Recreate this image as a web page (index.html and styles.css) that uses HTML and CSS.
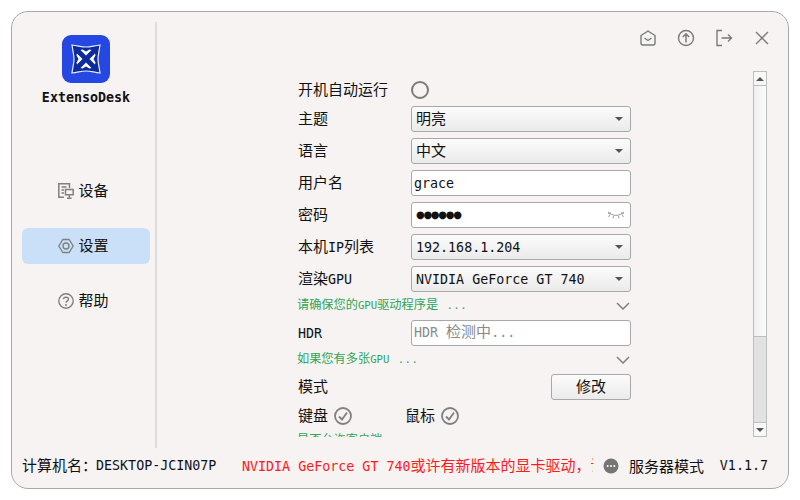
FILE: index.html
```html
<!DOCTYPE html>
<html lang="zh">
<head>
<meta charset="utf-8">
<title>ExtensoDesk</title>
<link rel="stylesheet" href="styles.css">
</head>
<body>
<div class="window">
  <div class="body">
    <aside class="sidebar">
      <svg class="logo" viewBox="0 0 48 48">
        <rect width="48" height="48" rx="9" fill="#2547e2"/>
        <path d="M10 10C17 11 20 12 24 12C28 12 31 11 38 10C37 17 36 20 36 24C36 28 37 31 38 38C31 37 28 36 24 36C20 36 17 37 10 38C11 31 12 28 12 24C12 20 11 17 10 10Z" fill="#0d2a9e" stroke="#e6ebff" stroke-width="1.200"/>
        <g fill="#fff">
          <path d="M24 20.500L18.500 15L20.500 14.500L24 16.500L27.500 14.500L29.500 15Z"/>
          <path d="M24 20.500L18.500 15L20.500 14.500L24 16.500L27.500 14.500L29.500 15Z" transform="rotate(90 24 24)"/>
          <path d="M24 20.500L18.500 15L20.500 14.500L24 16.500L27.500 14.500L29.500 15Z" transform="rotate(180 24 24)"/>
          <path d="M24 20.500L18.500 15L20.500 14.500L24 16.500L27.500 14.500L29.500 15Z" transform="rotate(270 24 24)"/>
        </g>
      </svg>
      <div class="brand">ExtensoDesk</div>
      <nav class="nav">
        <div class="nav-item">
          <svg class="nav-icon" viewBox="0 0 16 16"><path d="M11.500 5V.8H.8V14.200H6M3.500 4H8.500M3.500 7H6M3.500 10H6M7.500 6.500H15.200V11.800H7.500ZM11.300 11.800V15M9 15.200H13.600" fill="none" stroke="#808080" stroke-width="1.500"/></svg>
          <span class="nav-text">设备</span>
        </div>
        <div class="nav-item active">
          <svg class="nav-icon" viewBox="0 0 16 16"><path d="M4.800 1.500H11.200L15.200 8L11.200 14.500H4.800L.8 8Z" fill="none" stroke="#808080" stroke-width="1.400" stroke-linejoin="round"/><circle cx="8" cy="8" r="3" fill="none" stroke="#808080" stroke-width="1.400"/></svg>
          <span class="nav-text">设置</span>
        </div>
        <div class="nav-item">
          <svg class="nav-icon" viewBox="0 0 16 16"><circle cx="8" cy="8" r="7.200" fill="none" stroke="#808080" stroke-width="1.400"/><path d="M5.500 6.200C5.500 3.500 10.500 3.500 10.500 6.200C10.500 7.900 8 7.900 8 9.800" fill="none" stroke="#808080" stroke-width="1.400"/><circle cx="8" cy="12" r="1" fill="#808080"/></svg>
          <span class="nav-text">帮助</span>
        </div>
      </nav>
    </aside>
    <main class="main">
      <header class="topbar">
        <svg class="top-icon" viewBox="0 0 20 20"><path d="M3 7.500L10 3L17 7.500V15C17 16.200 16.200 17 15 17H5C3.800 17 3 16.200 3 15Z" fill="none" stroke="#7a7a7a" stroke-width="1.400" stroke-linejoin="round"/><path d="M6.500 10L10 12.500L13.500 10" fill="none" stroke="#7a7a7a" stroke-width="1.400"/></svg>
        <svg class="top-icon" viewBox="0 0 20 20"><circle cx="10" cy="10" r="7.500" fill="none" stroke="#7a7a7a" stroke-width="1.400"/><path d="M10 14.500V6M6.800 9L10 5.800L13.200 9" fill="none" stroke="#7a7a7a" stroke-width="1.500"/></svg>
        <svg class="top-icon" viewBox="0 0 20 20"><path d="M8 2.500H3V17.500H8" fill="none" stroke="#7a7a7a" stroke-width="1.400"/><path d="M7.500 10H17.500M14 6.500L17.500 10L14 13.500" fill="none" stroke="#7a7a7a" stroke-width="1.400"/></svg>
        <svg class="top-icon" viewBox="0 0 20 20"><path d="M4 4L16 16M16 4L4 16" fill="none" stroke="#7a7a7a" stroke-width="1.400"/></svg>
      </header>
      <div class="scroll-row">
        <div class="scroll-view">
          <div class="form">
            <div class="label">开机自动运行</div>
            <div class="radio-cell"><span class="radio"></span></div>

            <div class="label">主题</div>
            <div class="select"><span class="cjk">明亮</span><i class="caret"></i></div>

            <div class="label">语言</div>
            <div class="select"><span class="cjk">中文</span><i class="caret"></i></div>

            <div class="label">用户名</div>
            <div class="input tight"><span class="mono">grace</span></div>

            <div class="label">密码</div>
            <div class="input tight">
              <span class="dots">●●●●●●</span>
              <svg class="eye" viewBox="0 0 18 10"><path d="M1 2C6 6.500 12 6.500 17 2M3 4.500L1.500 7M6.500 6L6 8.500M11.500 6L12 8.500M15 4.500L16.500 7M1 4C2 3 2.500 3 4 3M17 4C16 3 15.500 3 14 3" fill="none" stroke="#9a9a9a" stroke-width="1"/></svg>
            </div>

            <div class="label">本机<span class="mono">IP</span>列表</div>
            <div class="select"><span class="mono">192.168.1.204</span><i class="caret"></i></div>

            <div class="label">渲染<span class="mono">GPU</span></div>
            <div class="select"><span class="mono">NVIDIA GeForce GT 740</span><i class="caret"></i></div>

            <div class="hint"><span class="hint-text">请确保您的<span class="mono-small">GPU</span>驱动程序是<span class="mono-small"> </span><span class="ellipsis">...</span></span>
              <svg class="chev" viewBox="0 0 14 8"><path d="M1 1L7 7L13 1" fill="none" stroke="#808080" stroke-width="1.500"/></svg></div>

            <div class="label"><span class="mono">HDR</span></div>
            <div class="input tight placeholder"><span class="cjk"><span class="mono">HDR </span> 检测中<span class="mono">...</span></span></div>

            <div class="hint"><span class="hint-text">如果您有多张<span class="mono-small">GPU </span><span class="ellipsis">...</span></span>
              <svg class="chev" viewBox="0 0 14 8"><path d="M1 1L7 7L13 1" fill="none" stroke="#808080" stroke-width="1.500"/></svg></div>

            <div class="label">模式</div>
            <div class="button-cell"><div class="button">修改</div></div>

            <div class="toggles">
              <span class="toggle"><span class="cjk">键盘</span><svg class="check" viewBox="0 0 18 18"><circle cx="9" cy="9" r="8" fill="none" stroke="#808080" stroke-width="1.800"/><path d="M5 9.500L8 12.500L13 5.500" fill="none" stroke="#808080" stroke-width="1.800"/></svg></span>
              <span class="toggle"><span class="cjk">鼠标</span><svg class="check" viewBox="0 0 18 18"><circle cx="9" cy="9" r="8" fill="none" stroke="#808080" stroke-width="1.800"/><path d="M5 9.500L8 12.500L13 5.500" fill="none" stroke="#808080" stroke-width="1.800"/></svg></span>
            </div>

            <div class="hint"><span class="hint-text">是否允许客户端</span></div>
          </div>
        </div>
        <div class="scrollbar">
          <div class="sb-btn"><i class="sb-up"></i></div>
          <div class="sb-thumb"></div>
          <div class="sb-track"></div>
          <div class="sb-btn"><i class="sb-down"></i></div>
        </div>
      </div>
    </main>
  </div>
  <footer class="footer">
    <span class="host"><span class="cjk">计算机名：</span><span class="mono host-name">DESKTOP-JCIN07P</span></span>
    <span class="warning"><span class="mono">NVIDIA GeForce GT 740</span>或许有新版本的显卡驱动，请更新</span>
    <svg class="more" viewBox="0 0 16 16"><circle cx="8" cy="8" r="7.500" fill="#757575"/><circle cx="4.700" cy="8" r="1" fill="#fff"/><circle cx="8" cy="8" r="1" fill="#fff"/><circle cx="11.300" cy="8" r="1" fill="#fff"/></svg>
    <span class="mode">服务器模式</span>
    <span class="version mono">V1.1.7</span>
  </footer>
</div>
</body>
</html>
```
FILE: styles.css
```css
* { box-sizing: border-box; }
html, body { height: 100%; }
body {
  margin: 11px;
  background: #fff;
  font-family: "Noto Sans CJK SC", "Liberation Sans", sans-serif;
  font-size: 15px;
  color: #111;
  overflow: hidden;
}
.mono {
  font-family: "DejaVu Sans Mono", "Noto Sans CJK SC", monospace;
  font-size: 13.33px;
}
.mono-small {
  font-family: "DejaVu Sans Mono", monospace;
  font-size: 10.67px;
}
.ellipsis {
  font-family: "DejaVu Sans Mono", monospace;
  font-size: 10.67px;
  margin-left: 2px;
  letter-spacing: 0.4px;
}
.window {
  width: 778px;
  height: 478px;
  border: 1px solid #aaa8a6;
  border-radius: 17px;
  background: #f6f3f2;
  display: flex;
  flex-direction: column;
  overflow: hidden;
}
.body { display: flex; height: 436px; flex: none; }

/* sidebar */
.sidebar {
  width: 145px;
  flex: none;
  margin-top: 10px;
  padding: 13px 5px 0 9px;
  border-right: 2px solid #dddbd9;
  display: flex;
  flex-direction: column;
  align-items: center;
}
.logo { width: 48px; height: 48px; flex: none; }
.brand {
  margin-top: 7px;
  padding-left: 1px;
  height: 16px;
  line-height: 16px;
  font-family: "DejaVu Sans Mono", monospace;
  font-size: 13.33px;
  font-weight: 700;
}
.nav {
  margin-top: 67px;
  width: 128px;
  display: flex;
  flex-direction: column;
  gap: 19px;
}
.nav-item {
  height: 36px;
  padding-left: 36px;
  border-radius: 6px;
  display: flex;
  align-items: center;
  gap: 5px;
  line-height: 1;
}
.nav-item.active { background: #cadff8; }
.nav-icon { width: 16px; height: 16px; flex: none; }
.nav-text { padding-bottom: 4px; }

/* main */
.main { flex: 1; min-width: 0; display: flex; flex-direction: column; padding-bottom: 11px; }
.topbar {
  height: 59px;
  flex: none;
  padding: 0 16px 8px 0;
  display: flex;
  justify-content: flex-end;
  align-items: center;
  gap: 18px;
}
.top-icon { width: 20px; height: 20px; }
.scroll-row { flex: 1; min-height: 0; display: flex; padding-right: 21px; }
.scroll-view { flex: 1; min-width: 0; overflow: hidden; padding: 9px 0 0 141px; }
.form {
  width: 333px;
  display: grid;
  grid-template-columns: 113px 220px;
  grid-template-rows: 20px repeat(6, 26px) 16px 26px 16px 26px 20px 16px;
  row-gap: 6px;
  align-items: center;
}
.label { height: 20px; line-height: 17px; white-space: nowrap; }
.label .mono { line-height: 1; }
.radio-cell { height: 20px; display: flex; align-items: center; }
.radio {
  width: 18px;
  height: 18px;
  border: 2.500px solid #7c7c7c;
  border-radius: 50%;
}
.cjk { padding-bottom: 3px; line-height: 1; }
.select, .input {
  height: 26px;
  border: 1px solid #a8a8a8;
  border-radius: 3px;
  display: flex;
  align-items: center;
  padding-left: 4px;
  line-height: 1;
  white-space: nowrap;
}
.select {
  background: linear-gradient(#fbfbfb, #ebebeb);
  justify-content: space-between;
  padding-right: 7px;
}
.select .mono, .input > .mono { padding-top: 2px; }
.input { background: #fff; }
.input.tight { padding-left: 2px; }
.caret {
  width: 0;
  height: 0;
  border-left: 4px solid transparent;
  border-right: 4px solid transparent;
  border-top: 4px solid #555;
}
.dots {
  font-family: "DejaVu Sans", sans-serif;
  font-size: 10px;
  letter-spacing: -1.3px;
  flex: 1;
  padding-left: 2px;
}
.eye { width: 18px; height: 10px; margin-right: 5px; flex: none; }
.placeholder { color: #8a8a8a; }
.hint {
  grid-column: 1 / -1;
  height: 16px;
  margin-left: -1px;
  color: #2fa55a;
  font-size: 12.2px;
  display: flex;
  justify-content: space-between;
  align-items: center;
  white-space: nowrap;
}
.hint-text { line-height: 1; padding-bottom: 2px; }
.chev { width: 14px; height: 8px; margin-right: 1px; }
.button-cell { display: flex; justify-content: flex-end; }
.button {
  width: 80px;
  height: 26px;
  border: 1px solid #a8a8a8;
  border-radius: 3px;
  background: linear-gradient(#fbfbfb, #ebebeb);
  text-align: center;
  line-height: 21px;
}
.toggles { grid-column: 1 / -1; display: flex; height: 20px; }
.toggle { width: 107px; display: flex; align-items: center; gap: 6px; }
.check { width: 18px; height: 18px; flex: none; }

/* scrollbar */
.scrollbar { width: 14px; flex: none; display: flex; flex-direction: column; }
.sb-btn {
  height: 15px;
  flex: none;
  border: 1px solid #bdbdbd;
  background: #f8f8f8;
  display: flex;
  align-items: center;
  justify-content: center;
}
.sb-up, .sb-down { width: 0; height: 0; border-left: 4px solid transparent; border-right: 4px solid transparent; }
.sb-up { border-bottom: 4px solid #555; }
.sb-down { border-top: 4px solid #555; }
.sb-thumb {
  height: 250px;
  flex: none;
  border: 1px solid #bdbdbd;
  border-top: 0;
  border-bottom: 0;
  background: linear-gradient(90deg, #f0f0f0, #fbfbfb);
}
.sb-track { flex: 1; border: 1px solid #bdbdbd; border-bottom: 0; background: #e2e2e2; }

/* footer */
.footer {
  height: 40px;
  flex: none;
  padding: 0 20px 4px 10px;
  display: flex;
  align-items: center;
  white-space: nowrap;
  line-height: 1;
}
.host { width: 219px; flex: none; display: flex; align-items: center; }
.host-name { margin-left: -1px; }
.warning { width: 351px; margin-left: 1px; flex: none; overflow: hidden; color: #ff1a1a; padding-bottom: 2px; }
.warning .mono { line-height: 1; }
.more { width: 16px; height: 16px; margin-left: 10px; flex: none; }
.mode { margin-left: 10px; padding-bottom: 2px; }
.version { margin-left: auto; }
```
